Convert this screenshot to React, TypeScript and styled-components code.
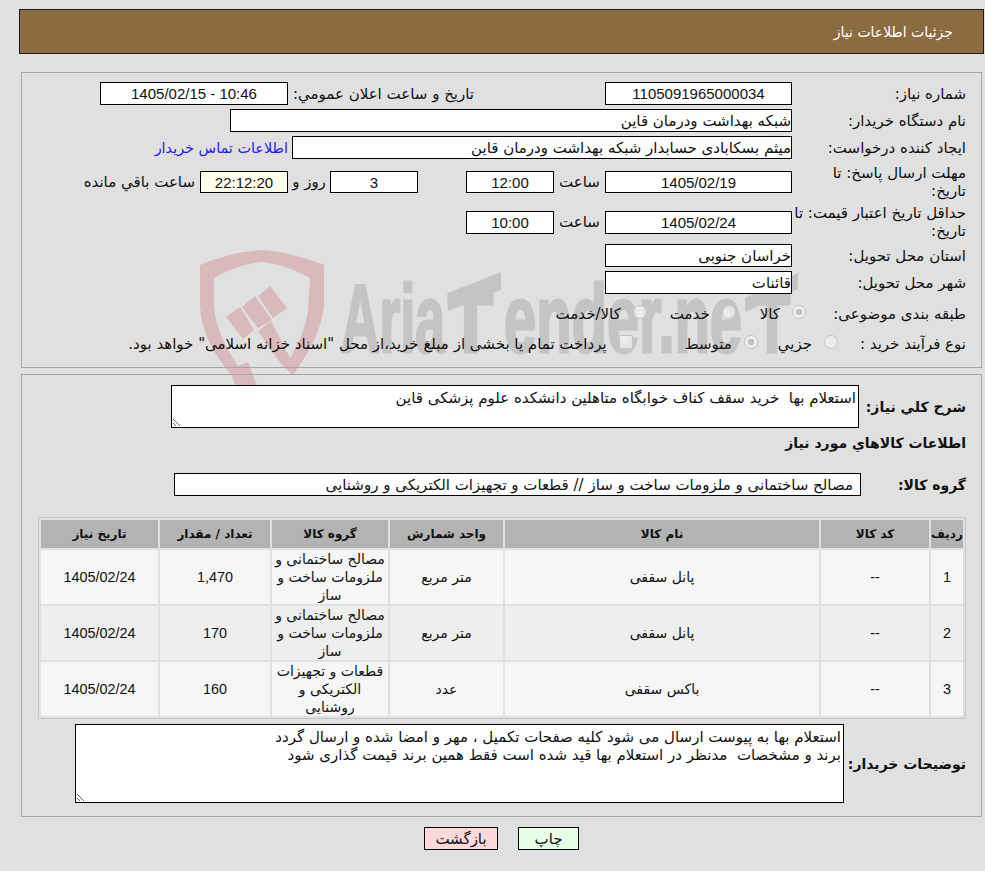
import styled, { createGlobalStyle } from 'styled-components';

const GlobalStyle = createGlobalStyle`
  html, body {
    margin: 0;
    padding: 0;
    background: #e0e0e0;
  }
  body {
    font-family: "DejaVu Sans", Tahoma, sans-serif;
    font-size: 15px;
    color: #111;
  }
`;

const Page = styled.div`
  position: relative;
  box-sizing: border-box;
  width: 985px;
  height: 871px;
  padding: 9px 1px 0 19px;
  direction: rtl;
  overflow: hidden;
`;

const Watermark = styled.svg`
  position: absolute;
  left: 0;
  top: 0;
  z-index: 0;
`;

const Header = styled.div`
  box-sizing: border-box;
  height: 45px;
  padding-right: 30px;
  display: flex;
  align-items: center;
  background: #8b6b40;
  border: 1px solid #1c1c1c;
  color: #fff;
  font-size: 14px;
`;

const Panel = styled.section<{ $top: number; $height: number }>`
  position: relative;
  z-index: 1;
  box-sizing: border-box;
  height: ${(p) => p.$height}px;
  margin: ${(p) => p.$top}px 2px 0 0;
  width: 961px;
  padding: 9px 15px 0 15px;
  border: 1px solid #a6a6a6;
`;

const Row = styled.div<{ $h?: number; $mt?: number }>`
  display: flex;
  align-items: center;
  height: ${(p) => p.$h ?? 23}px;
  margin-top: ${(p) => p.$mt ?? 0}px;
`;

const Label = styled.div<{ $w?: number }>`
  flex: none;
  width: ${(p) => p.$w ?? 174}px;
  line-height: 18px;
  white-space: nowrap;
`;

const Box = styled.div<{ $w: number; $num?: boolean; $h?: number; $bg?: string; $pad?: number; $mr?: number }>`
  flex: none;
  box-sizing: border-box;
  width: ${(p) => p.$w}px;
  height: ${(p) => p.$h ?? 23}px;
  margin-right: ${(p) => p.$mr ?? 0}px;
  padding-right: ${(p) => p.$pad ?? 0}px;
  display: flex;
  align-items: center;
  justify-content: ${(p) => (p.$num ? 'center' : 'flex-start')};
  background: ${(p) => p.$bg ?? '#fff'};
  border: 1px solid #000;
  white-space: nowrap;
  overflow: hidden;
  font-family: ${(p) => (p.$num ? '"Liberation Sans", sans-serif' : 'inherit')};
  direction: ${(p) => (p.$num ? 'ltr' : 'rtl')};
`;

const Unit = styled.span<{ $w: number }>`
  flex: none;
  width: ${(p) => p.$w}px;
  text-align: center;
`;

const Note = styled.span<{ $mr?: number; $w?: number }>`
  flex: none;
  margin-right: ${(p) => p.$mr ?? 0}px;
  width: ${(p) => (p.$w ? `${p.$w}px` : 'auto')};
  white-space: nowrap;
`;

const ContactLink = styled.a`
  margin-right: 4px;
  color: #1a1aff;
  font-size: 14.4px;
  text-decoration: none;
  white-space: nowrap;
`;

const Choice = styled.input<{ $mr?: number; $square?: boolean }>`
  appearance: none;
  flex: none;
  box-sizing: border-box;
  width: 14px;
  height: 14px;
  margin: -4px ${(p) => p.$mr ?? 0}px 0 12px;
  border: 1px solid #c4c4c4;
  border-radius: ${(p) => (p.$square ? '2px' : '50%')};
  background: rgba(240, 240, 240, 0.75);
  &:checked {
    background: radial-gradient(circle, #c0c0c0 0 3px, #efefef 3.5px);
  }
`;

const BoldLabel = styled.div<{ $w?: number }>`
  flex: none;
  width: ${(p) => (p.$w ? `${p.$w}px` : 'auto')};
  font-size: 14px;
  font-weight: bold;
  white-space: nowrap;
`;

const Memo = styled.textarea<{ $w: number; $h: number }>`
  flex: none;
  box-sizing: border-box;
  width: ${(p) => p.$w}px;
  height: ${(p) => p.$h}px;
  padding: 3px 2px;
  border: 1px solid #000;
  border-radius: 0;
  outline: none;
  background: #fff;
  color: #111;
  direction: rtl;
  font-family: inherit;
  font-size: 15px;
  line-height: 18px;
  resize: both;
`;

const Table = styled.table`
  width: 928px;
  margin-top: 21px;
  table-layout: fixed;
  border-collapse: separate;
  border-spacing: 2px;
  border: 1px solid #c6c6c6;
`;

const HeadCell = styled.th<{ $w: number }>`
  width: ${(p) => p.$w}px;
  height: 28px;
  padding: 0;
  background: #b3b3b3;
  font-size: 12px;
  font-weight: bold;
  text-align: center;
`;

const ItemRow = styled.tr<{ $odd: boolean }>`
  background: ${(p) => (p.$odd ? '#f6f6f6' : '#eeeeee')};
`;

const Cell = styled.td<{ $num?: boolean }>`
  height: 53px;
  padding: 0;
  text-align: center;
  line-height: 18px;
  font-size: ${(p) => (p.$num ? 14.4 : 14)}px;
  font-family: ${(p) => (p.$num ? '"Liberation Sans", sans-serif' : 'inherit')};
`;

const Footer = styled.div`
  position: relative;
  z-index: 1;
  margin-top: 10px;
  display: flex;
  justify-content: center;
  gap: 20px;
`;

const ActionButton = styled.button<{ $bg: string; $w: number }>`
  box-sizing: border-box;
  width: ${(p) => p.$w}px;
  height: 23px;
  padding: 0;
  border: 1px solid #000;
  border-radius: 0;
  background: ${(p) => p.$bg};
  color: #111;
  font-family: inherit;
  font-size: 15px;
`;

const items = [
  { id: '1', name: 'پانل سقفی', unit: 'متر مربع', group: 'مصالح ساختمانی و ملزومات ساخت و ساز', qty: '1,470' },
  { id: '2', name: 'پانل سقفی', unit: 'متر مربع', group: 'مصالح ساختمانی و ملزومات ساخت و ساز', qty: '170' },
  { id: '3', name: 'باکس سقفی', unit: 'عدد', group: 'قطعات و تجهیزات الکتریکی و روشنایی', qty: '160' },
];

const columns: [string, number][] = [
  ['رديف', 32],
  ['کد کالا', 108],
  ['نام کالا', 314],
  ['واحد شمارش', 113],
  ['گروه کالا', 116],
  ['تعداد / مقدار', 110],
  ['تاریخ نیاز', 117],
];

const buyerNote =
  'استعلام بها به پیوست ارسال می شود کلیه صفحات تکمیل ، مهر و امضا شده و ارسال گردد\nبرند و مشخصات  مدنظر در استعلام بها قید شده است فقط همین برند قیمت گذاری شود';

// the words sit at the x positions of the logo, the slanted T bars are drawn on top
const logoWords: { text: string; x: number; w: number; size: number }[] = [
  { text: 'Aria', x: 341, w: 104, size: 96 },
  { text: 'T', x: 448, w: 45, size: 84 },
  { text: 'ender.ne', x: 504, w: 238, size: 96 },
  { text: 'T', x: 754, w: 36, size: 84 },
];

function AriaWatermark() {
  return (
    <Watermark width="985" height="400" viewBox="0 0 985 400" aria-hidden="true">
      <path
        fill="#d9b9bb"
        d="M262 250 Q290 252 324 265 L324 305 Q322 335 293 375 L281 364 L290 358 Q304 335 308 312 L310 278 Q285 264 262 262 Q238 264 214 278 L214 305 Q216 335 238 366 L248 362 L257 386 L236 386 L232 376 Q201 340 200 305 L200 265 Q230 252 262 250 Z"
      />
      <path fill="#d9b9bb" d="M226 317 L240 307 L254 330 L243 339 Z" />
      <path fill="#d9b9bb" d="M242 307 L255 296 L272 320 L258 328 Z" />
      <path fill="#d9b9bb" d="M258 296 L270 286 L287 308 L273 318 Z" />
      <path fill="#d9b9bb" d="M258 331 L271 321 L290 358 L293 375 L281 364 Z" />
      {logoWords.map((word) => (
        <text
          key={word.x}
          x={word.x}
          y="352"
          fill="#c4c4c4"
          stroke="#c4c4c4"
          strokeWidth="3"
          fontFamily="'Liberation Sans', sans-serif"
          fontWeight="bold"
          fontSize={word.size}
          textLength={word.w}
          lengthAdjust="spacingAndGlyphs"
          direction="ltr"
        >
          {word.text}
        </text>
      ))}
      <path fill="#c4c4c4" d="M448 293 L501 272 L501 290 L448 311 Z" />
      <path fill="#c4c4c4" d="M745 298 L798 273 L798 289 L745 312 Z" />
    </Watermark>
  );
}

export default function App() {
  return (
    <>
      <GlobalStyle />
      <Page>
        <AriaWatermark />
        <Header>جزئیات اطلاعات نیاز</Header>

        <Panel $top={18} $height={296}>
          <Row>
            <Label>شماره نیاز:</Label>
            <Box $w={187} $num>1105091965000034</Box>
            <Note $mr={131} $w={186}>تاریخ و ساعت اعلان عمومي:</Note>
            <Box $w={188} $num>1405/02/15 - 10:46</Box>
          </Row>
          <Row $mt={4}>
            <Label>نام دستگاه خریدار:</Label>
            <Box $w={562}>شبکه بهداشت ودرمان قاین</Box>
          </Row>
          <Row $mt={4}>
            <Label>ایجاد کننده درخواست:</Label>
            <Box $w={500}>میثم بسکابادی حسابدار شبکه بهداشت ودرمان قاین</Box>
            <ContactLink href="#">اطلاعات تماس خریدار</ContactLink>
          </Row>
          <Row $h={38} $mt={4}>
            <Label>مهلت ارسال پاسخ: تا<br />تاریخ:</Label>
            <Box $w={187} $h={22} $num>1405/02/19</Box>
            <Unit $w={51}>ساعت</Unit>
            <Box $w={88} $h={22} $num>12:00</Box>
            <Box $w={88} $h={22} $num $mr={48}>3</Box>
            <Unit $w={42}>روز و</Unit>
            <Box $w={88} $h={22} $num $bg="#ffffee">22:12:20</Box>
            <Note $mr={5}>ساعت باقي مانده</Note>
          </Row>
          <Row $h={38} $mt={2}>
            <Label>حداقل تاریخ اعتبار قیمت: تا<br />تاریخ:</Label>
            <Box $w={187} $num>1405/02/24</Box>
            <Unit $w={51}>ساعت</Unit>
            <Box $w={88} $num>10:00</Box>
          </Row>
          <Row $mt={3}>
            <Label>استان محل تحویل:</Label>
            <Box $w={187}>خراسان جنوبی</Box>
          </Row>
          <Row $mt={4}>
            <Label>شهر محل تحویل:</Label>
            <Box $w={187}>قائنات</Box>
          </Row>
          <Row $mt={8}>
            <Label $w={160}>طبقه بندی موضوعی:</Label>
            <Choice type="radio" name="kind" defaultChecked disabled />
            <Note>کالا</Note>
            <Choice type="radio" name="kind" disabled $mr={24} />
            <Note>خدمت</Note>
            <Choice type="radio" name="kind" disabled $mr={23} />
            <Note>کالا/خدمت</Note>
          </Row>
          <Row $mt={7}>
            <Label $w={128}>نوع فرآیند خرید :</Label>
            <Choice type="radio" name="process" disabled />
            <Note>جزيي</Note>
            <Choice type="radio" name="process" defaultChecked disabled $mr={20} />
            <Note>متوسط</Note>
            <Choice type="checkbox" disabled $square $mr={52} />
            <Note>پرداخت تمام یا بخشی از مبلغ خرید،از محل "اسناد خزانه اسلامی" خواهد بود.</Note>
          </Row>
        </Panel>

        <Panel $top={6} $height={443}>
          <Row $h={43} $mt={1}>
            <BoldLabel $w={107}>شرح كلي نياز:</BoldLabel>
            <Memo $w={688} $h={43} readOnly defaultValue="استعلام بها  خرید سقف کناف خوابگاه متاهلین دانشکده علوم پزشکی قاین" />
          </Row>
          <Row $h={18} $mt={6}>
            <BoldLabel>اطلاعات كالاهاي مورد نياز</BoldLabel>
          </Row>
          <Row $mt={21}>
            <BoldLabel $w={105}>گروه کالا:</BoldLabel>
            <Box $w={687} $pad={7}>مصالح ساختمانی و ملزومات ساخت و ساز // قطعات و تجهیزات الکتریکی و روشنایی</Box>
          </Row>
          <Table>
            <thead>
              <tr>
                {columns.map(([title, width]) => (
                  <HeadCell key={title} $w={width}>{title}</HeadCell>
                ))}
              </tr>
            </thead>
            <tbody>
              {items.map((item, i) => (
                <ItemRow key={item.id} $odd={i % 2 === 0}>
                  <Cell $num>{item.id}</Cell>
                  <Cell $num>--</Cell>
                  <Cell>{item.name}</Cell>
                  <Cell>{item.unit}</Cell>
                  <Cell>{item.group}</Cell>
                  <Cell $num>{item.qty}</Cell>
                  <Cell $num>1405/02/24</Cell>
                </ItemRow>
              ))}
            </tbody>
          </Table>
          <Row $h={79} $mt={5}>
            <BoldLabel $w={122}>توضیحات خریدار:</BoldLabel>
            <Memo $w={769} $h={79} readOnly defaultValue={buyerNote} />
          </Row>
        </Panel>

        <Footer>
          <ActionButton $bg="#e6ffe6" $w={61}>چاپ</ActionButton>
          <ActionButton $bg="#ffd9d9" $w={74}>بازگشت</ActionButton>
        </Footer>
      </Page>
    </>
  );
}
